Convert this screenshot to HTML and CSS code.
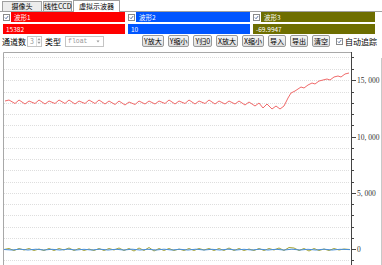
FILE: index.html
```html
<!DOCTYPE html>
<html lang="zh">
<head>
    <meta charset="UTF-8">
    <title>虚拟示波器</title>
    <link rel="stylesheet" href="styles.css">
</head>
<body>
    <div class="tabs">
        <div class="tab tab-cam">摄像头</div>
        <div class="tab tab-ccd">线性CCD</div>
        <div class="tab tab-scope active">虚拟示波器</div>
    </div>

    <div class="channels">
        <div class="ch">
            <span class="check"><svg viewBox="0 0 7 7"><path d="M1.3 3.6 L2.9 5.2 L5.8 1.5"/></svg></span>
            <span class="field red">波形1</span>
        </div>
        <div class="ch">
            <span class="check"><svg viewBox="0 0 7 7"><path d="M1.3 3.6 L2.9 5.2 L5.8 1.5"/></svg></span>
            <span class="field blue">波形2</span>
        </div>
        <div class="ch">
            <span class="check"><svg viewBox="0 0 7 7"><path d="M1.3 3.6 L2.9 5.2 L5.8 1.5"/></svg></span>
            <span class="field olive">波形3</span>
        </div>
        <div class="field red">15382</div>
        <div class="field blue">10</div>
        <div class="field olive">-69.9947</div>
    </div>

    <div class="toolbar">
        <span class="label">通道数</span>
        <span class="spin">
            <span class="spin-val">3</span>
            <span class="spin-arrows">
                <svg viewBox="0 0 5 4"><path d="M0.5 3.5 L2.5 0.8 L4.5 3.5Z"/></svg>
                <svg viewBox="0 0 5 4"><path d="M0.5 0.5 L2.5 3.2 L4.5 0.5Z"/></svg>
            </span>
        </span>
        <span class="label type-label">类型</span>
        <span class="combo">
            <span class="combo-val">float</span>
            <svg viewBox="0 0 5 4"><path d="M0.5 0.5 L2.5 3.2 L4.5 0.5Z"/></svg>
        </span>

        <div class="buttons">
            <button>Y放大</button>
            <button>Y缩小</button>
            <button>Y归0</button>
            <button>X放大</button>
            <button>X缩小</button>
            <button>导入</button>
            <button>导出</button>
            <button>清空</button>
        </div>

        <span class="check"><svg viewBox="0 0 7 7"><path d="M1.3 3.6 L2.9 5.2 L5.8 1.5"/></svg></span>
        <span class="label track">自动追踪</span>
    </div>

    <svg class="scope" width="382" height="213" viewBox="0 52 382 213">
        <!-- grid, one line per 1000 -->
        <path class="grid" d="M4 57.5H350 M4 69.5H350 M4 80.5H350 M4 92.5H350 M4 103.5H350 M4 114.5H350 M4 125.5H350 M4 137.5H350 M4 148.5H350 M4 159.5H350 M4 170.5H350 M4 182.5H350 M4 193.5H350 M4 204.5H350 M4 215.5H350 M4 227.5H350 M4 238.5H350 M4 249.5H350 M4 260.5H350"/>

        <!-- frame -->
        <path class="frame" d="M3.5 265V52.5H351"/>
        <path class="edge" d="M381.5 58V265"/>

        <!-- right axis -->
        <path class="axis" d="M351.5 52V265"/>
        <path class="axis" d="M351 57.5H354 M351 69.5H354 M351 80.5H356 M351 92.5H354 M351 103.5H354 M351 114.5H354 M351 125.5H354 M351 137.5H356 M351 148.5H354 M351 159.5H354 M351 170.5H354 M351 182.5H354 M351 193.5H356 M351 204.5H354 M351 215.5H354 M351 227.5H354 M351 238.5H354 M351 249.5H356 M351 260.5H354"/>
        <text class="ylabel" x="357" y="83">15, 000</text>
        <text class="ylabel" x="357" y="140">10, 000</text>
        <text class="ylabel" x="357" y="196">5, 000</text>
        <text class="ylabel" x="357" y="252">0</text>

        <!-- waveforms -->
        <polyline class="wave w3" points="4,249.5 9,248.5 14,250.5 19,248.5 24,250 29,248.5 34,250.5 39,249 44,250.5 49,248.5 54,250.5 59,248.5 64,250 69,248 74,250.5 79,248.5 84,250.5 89,249 94,250.5 99,248.5 104,250.5 109,248.5 114,250 119,248 124,250.5 129,248.5 134,251 139,248 144,250.5 149,247.5 154,251 159,248.5 164,250.5 169,248.5 174,250.5 179,249 184,250.5 189,248.5 194,250.5 199,248.5 204,250 209,248.5 214,250.5 219,248.5 224,250.5 229,248 234,250.5 239,248.5 244,250.5 249,249 254,250.5 259,248.5 264,250.5 269,248.5 274,250 279,248 284,250.5 289,247.5 294,248 299,250.5 304,248.5 309,251 314,248.5 319,250.5 324,249 329,250.5 334,248.5 339,250 344,249 350,249.5"/>
        <polyline class="wave w2" points="4,249.5 12,250 20,249.2 28,250 36,249.2 44,250 52,249.3 60,250 68,249.2 76,250 84,249.3 92,250 100,249.2 108,250 116,249.3 124,250 132,249.2 140,250 148,249.3 156,250 164,249.2 172,250 180,249.3 188,250 196,249.2 204,250 212,249.3 220,250 228,249.2 236,250 244,249.3 252,250 260,249.2 268,250 276,249.3 284,250 292,249.2 300,250 308,249.3 316,250 324,249.2 332,250 340,249.3 350,249.6"/>
        <polyline class="wave w1" points="5,101 9,100 15,103.5 19,100 25,104 29,101 35,103.5 39,100 45,104 49,101 55,103.5 59,100 65,103.5 69,100 75,104 79,101 85,103.5 89,100 95,103.5 99,100 105,104 109,101 115,104.5 119,101 125,105 129,102 135,104.5 139,101 145,104 149,101 155,104 159,101 165,103.5 169,100 175,104 179,101 185,103.5 189,100 195,104 199,101 205,103.5 209,100 215,104 219,101 225,104 229,101 235,104 239,101 245,105 249,102 255,106 259,103 263,108 267,104 272,109 276,106 280,109 284,106 288,98 291,93 295,91 298,89 301,87 304,88 308,85 312,83 315,84 319,81 323,80 327,79 330,80 334,77 338,76 341,77 345,74 349,73"/>
    </svg>
</body>
</html>
```

FILE: styles.css
```css
* {
    box-sizing: border-box;
}
body {
    margin: 0;
    width: 382px;
    height: 265px;
    overflow: hidden;
    background-color: #fff;
    font-family: "Noto Sans CJK SC", sans-serif;
    font-size: 8px;
    color: #000;
}

/* Tabs */
.tabs {
    display: flex;
    align-items: flex-end;
    height: 12px;
    padding-left: 2px;
    border-bottom: 1px solid #a0a0a0;
}
.tab {
    flex: none;
    height: 10px;
    line-height: 9px;
    font-size: 7px;
    white-space: nowrap;
    text-align: center;
    background-color: #ececec;
    border: 1px solid #a0a0a0;
    border-bottom: none;
    margin-right: 1px;
}
.tab-cam {
    width: 40px;
}
.tab-ccd {
    width: 29px;
}
.tab-scope {
    width: 47px;
}
.tab.active {
    height: 12px;
    line-height: 11px;
    background-color: #fff;
    margin-bottom: -1px;
}

/* Channel fields */
.channels {
    display: grid;
    grid-template-columns: repeat(3, 122px);
    column-gap: 3px;
    row-gap: 2px;
    padding-left: 3px;
}
.ch {
    display: flex;
    align-items: center;
    gap: 1px;
}
.check {
    display: inline-block;
    width: 7px;
    height: 7px;
    flex: none;
    background-color: #fff;
    border: 1px solid #8a8a8a;
}
.check svg {
    display: block;
    width: 5px;
    height: 5px;
}
.check path {
    fill: none;
    stroke: #2c4a86;
    stroke-width: 1.1;
}
.field {
    flex: 1;
    height: 10px;
    line-height: 10px;
    padding-left: 3px;
    font-size: 6.5px;
    color: #fff;
    white-space: nowrap;
}
.red {
    background-color: #ff0000;
}
.blue {
    background-color: #0055ff;
}
.olive {
    background-color: #6e6e00;
}

/* Toolbar */
.toolbar {
    display: flex;
    align-items: center;
    height: 12px;
    margin-top: 1px;
    padding-left: 2px;
    white-space: nowrap;
}
.label {
    flex: none;
}
.spin {
    display: flex;
    flex: none;
    width: 15px;
    height: 11px;
    margin-left: 1px;
    border: 1px solid #c4c4c4;
    color: #999;
    font-size: 7px;
}
.spin-val {
    flex: 1;
    line-height: 9px;
    padding-left: 2px;
}
.spin-arrows {
    display: flex;
    flex-direction: column;
    justify-content: center;
    width: 5px;
    border-left: 1px solid #ddd;
}
.spin-arrows svg {
    width: 4px;
    height: 4px;
}
.spin-arrows path,
.combo path {
    fill: #999;
}
.type-label {
    margin-left: 3px;
}
.combo {
    display: flex;
    flex: none;
    align-items: center;
    justify-content: space-between;
    width: 39px;
    height: 11px;
    margin-left: 4px;
    padding: 0 3px 0 2px;
    border: 1px solid #c4c4c4;
    color: #999;
    font-family: "Liberation Mono", monospace;
    font-size: 6.5px;
}
.combo svg {
    width: 4px;
    height: 3px;
}
.buttons {
    display: flex;
    flex: none;
    gap: 4px;
    margin-left: 38px;
    margin-right: 6px;
}
button {
    flex: none;
    height: 12px;
    padding: 0 1px;
    font-family: "Noto Sans CJK SC", sans-serif;
    font-size: 7px;
    line-height: 10px;
    white-space: nowrap;
    color: #000;
    background: linear-gradient(#f6f6f6, #dedede);
    border: 1px solid #9a9a9a;
    border-radius: 2px;
}
.track {
    margin-left: 2px;
}

/* Scope */
.scope {
    display: block;
    margin-top: 5px;
}
.grid {
    stroke: #dedede;
    stroke-width: 1;
    stroke-dasharray: 1 1;
}
.frame {
    fill: none;
    stroke: #a8a8a8;
}
.edge {
    stroke: #c8c8c8;
}
.axis {
    fill: none;
    stroke: #444;
}
.ylabel {
    font-family: "Liberation Serif", serif;
    font-size: 7.5px;
    fill: #333;
}
.wave {
    fill: none;
    stroke-width: 1;
    stroke-linejoin: round;
}
.w1 {
    stroke: #f06a6a;
}
.w2 {
    stroke: #4a90d8;
}
.w3 {
    stroke: #a4a43a;
}
```
